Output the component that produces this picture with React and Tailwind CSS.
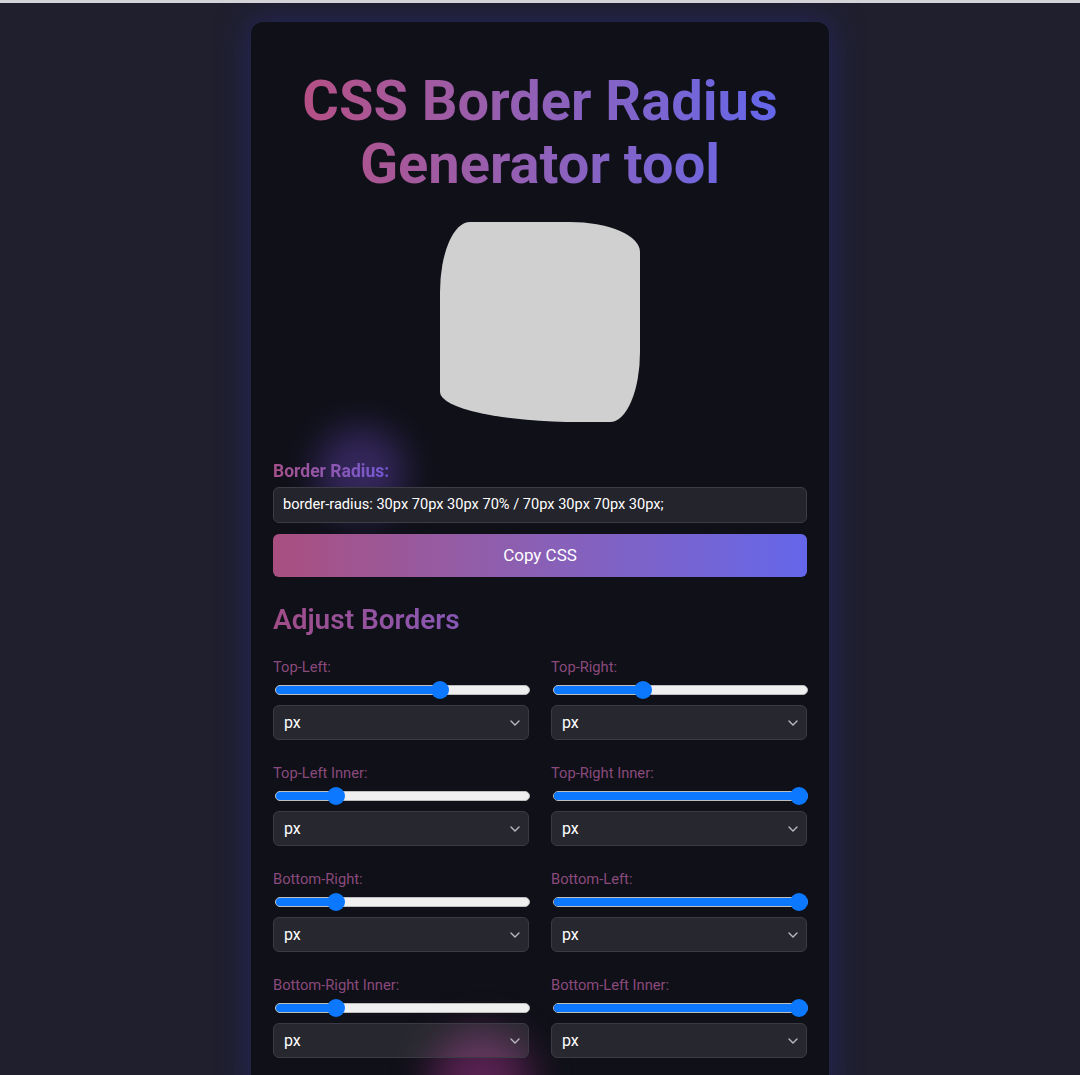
import React from "react";

const controls = [
  { label: "Top-Left:", value: 66 },
  { label: "Top-Right:", value: 34 },
  { label: "Top-Left Inner:", value: 22 },
  { label: "Top-Right Inner:", value: 100 },
  { label: "Bottom-Right:", value: 22 },
  { label: "Bottom-Left:", value: 100 },
  { label: "Bottom-Right Inner:", value: 22 },
  { label: "Bottom-Left Inner:", value: 100 },
];

function Slider({ value }) {
  return (
    <div className="relative h-[18px] ml-[2px] -mr-[1px] flex items-center">
      <div className="w-full h-[10px] rounded-full bg-[#efefef] border border-[#bdbdbd] overflow-hidden">
        <div className="h-full bg-[#0b78ff]" style={{ width: `${value}%` }} />
      </div>
      <div
        className="absolute top-0 w-[18px] h-[18px] rounded-full bg-[#0b78ff]"
        style={{ left: `calc(${value}% - ${value / 100 * 18}px)` }}
      />
    </div>
  );
}

function UnitSelect() {
  return (
    <div className="h-[35px] rounded-[6px] border border-[#3b3b44] bg-[rgba(255,255,255,0.1)] flex items-center justify-between pl-[10px] pr-[8px] text-[16px] text-white relative z-10">
      <span>px</span>
      <svg width="10" height="6" viewBox="0 0 10 6" fill="none">
        <path d="M1 1l4 4 4-4" stroke="#b8b8c0" strokeWidth="1.4" strokeLinecap="round" />
      </svg>
    </div>
  );
}

export default function App() {
  return (
    <div className="min-h-[1075px] bg-[#1f1f2e] border-t-[3px] border-[#d4d4d8] font-['Roboto',sans-serif] flex justify-center pt-[19px] overflow-hidden">
      <div className="relative w-[578px] bg-[#0f1018] rounded-[12px] shadow-[0_0_28px_6px_rgba(40,40,110,0.55)] px-[22px] pt-[48px] pb-[40px]">
        <div className="absolute left-[65px] top-[405px] w-[90px] h-[90px] rounded-full bg-[#5a3fa0] opacity-50 blur-[18px]" />
        <div className="absolute left-[180px] top-[1010px] w-[100px] h-[100px] rounded-full bg-[#8a2e78] opacity-60 blur-[20px]" />

        <h1 className="text-[56px] leading-[63px] font-bold text-center bg-gradient-to-r from-[#b94c7e] to-[#5d66f0] bg-clip-text text-transparent">
          CSS Border Radius
          <br />
          Generator tool
        </h1>

        <div className="flex justify-center mt-[26px]">
          <div className="w-[200px] h-[200px] bg-[#d0d0d0] rounded-[30px_70px_30px_70%/70px_30px_70px_30px]" />
        </div>

        <div className="relative mt-[37px]">
          <span className="inline-block text-[17.5px] font-bold leading-[24px] bg-gradient-to-r from-[#a7508a] to-[#7358d8] bg-clip-text text-transparent">
            Border Radius:
          </span>
          <div className="mt-[3px] h-[36px] rounded-[6px] border border-[#3d3d46] bg-[#24242c] flex items-center px-[9px] text-[14.6px] text-white">
            border-radius: 30px 70px 30px 70% / 70px 30px 70px 30px;
          </div>
          <button className="mt-[11px] w-full h-[43px] rounded-[6px] bg-gradient-to-r from-[#a94f80] to-[#6466ea] text-[17px] text-white">
            Copy CSS
          </button>
        </div>

        <h2 className="mt-[26px] text-[28px] font-semibold leading-[34px] bg-gradient-to-r from-[#a14c87] via-[#7b59c9] to-[#6366f1] bg-clip-text text-transparent">
          Adjust Borders
        </h2>

        <div className="grid grid-cols-2 gap-x-[22px] gap-y-[23px] mt-[20px]">
          {controls.map((c) => (
            <div key={c.label} className="flex flex-col">
              <span className="text-[14.7px] leading-[20px] text-[#8a4a7c]">{c.label}</span>
              <div className="mt-[4px]">
                <Slider value={c.value} />
              </div>
              <div className="mt-[6px]">
                <UnitSelect />
              </div>
            </div>
          ))}
        </div>
      </div>
    </div>
  );
}
